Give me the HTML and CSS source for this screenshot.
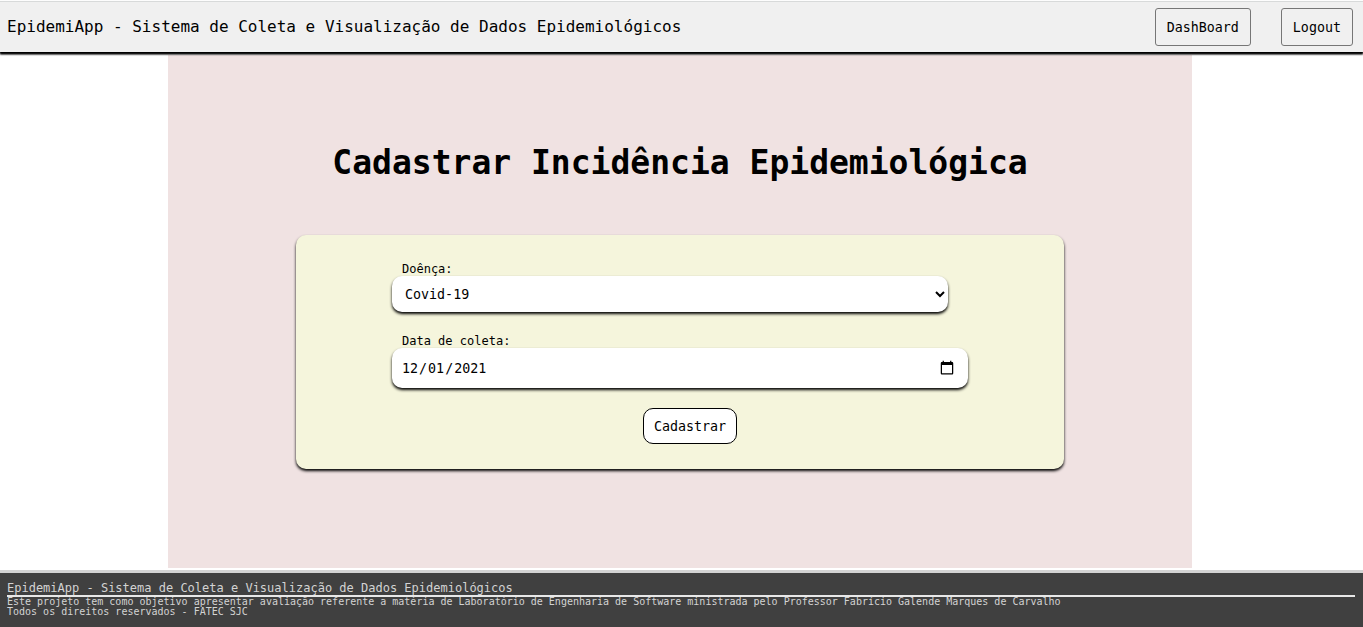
FILE: index.html
```html
<!DOCTYPE html>
<html lang="pt-BR">
<head>
<meta charset="utf-8">
<title>EpidemiApp</title>
<link rel="stylesheet" href="styles.css">
</head>
<body>
<header class="topbar">
  <span class="brand">EpidemiApp - Sistema de Coleta e Visualização de Dados Epidemiológicos</span>
  <nav class="nav">
    <button type="button" class="nav-button">DashBoard</button>
    <button type="button" class="nav-button">Logout</button>
  </nav>
</header>
<main class="page">
  <section class="panel">
    <h1 class="title">Cadastrar Incidência Epidemiológica</h1>
    <form class="card">
      <div class="field">
        <label class="label" for="disease">Doênça:</label>
        <select class="control select" id="disease"><option>Covid-19</option></select>
      </div>
      <div class="field">
        <label class="label" for="date">Data de coleta:</label>
        <input class="control date" id="date" type="date" value="2021-12-01">
      </div>
      <button type="button" class="submit">Cadastrar</button>
    </form>
  </section>
</main>
<footer class="footer">
  <p class="footer-title">EpidemiApp - Sistema de Coleta e Visualização de Dados Epidemiológicos</p>
  <p class="footer-text">Este projeto tem como objetivo apresentar avaliação referente a matéria de Laboratório de Engenharia de Software ministrada pelo Professor Fabrício Galende Marques de Carvalho</p>
  <p class="footer-text">Todos os direitos reservados - FATEC SJC</p>
</footer>
</body>
</html>
```
FILE: styles.css
```css
* {
  box-sizing: border-box;
  font-family: "Lucida Sans Typewriter", "DejaVu Sans Mono", monospace;
}

body {
  display: flex;
  flex-direction: column;
  min-height: 100vh;
  margin: 0;
  padding-top: 1px;
  background: #fff;
  color: #000;
}

.topbar {
  position: relative;
  display: flex;
  align-items: center;
  justify-content: space-between;
  padding: 6px 10px 6px 7px;
  border-top: 1px solid #d8dada;
  background: #f0f0f0;
  box-shadow: 0 2px 2px #000, 0 2px 2px #000;
}

.brand {
  font-size: 16px;
  line-height: 20px;
}

.nav {
  display: flex;
  gap: 30px;
}

.nav-button {
  height: 38px;
  padding: 0 11px;
  border: 1px solid #767676;
  border-radius: 3px;
  background: #f0f0f0;
  color: #000;
}

.page {
  flex: 1;
  display: flex;
  justify-content: center;
  padding: 3px 3px 2px 0;
}

.panel {
  display: flex;
  flex-direction: column;
  align-items: center;
  width: 100%;
  max-width: 1024px;
  padding: 88px 16px 16px;
  background: #f0e2e2;
}

.title {
  margin: 0 0 52px;
  font-size: 33px;
  line-height: 40px;
}

.card {
  display: flex;
  flex-direction: column;
  align-items: center;
  gap: 20px;
  width: 100%;
  max-width: 768px;
  padding: 27px 16px 25px;
  border-radius: 10px;
  background: #f5f5dc;
  box-shadow: 0 2px 3px #000;
}

.field {
  display: flex;
  flex-direction: column;
  width: 100%;
  max-width: 576px;
}

.field:first-child {
  margin-bottom: 2px;
}

.label {
  padding-left: 10px;
  font-size: 12px;
  line-height: 14px;
}

.control {
  border: 0;
  border-radius: 10px;
  background: #fff;
  color: #000;
  box-shadow: 0 2px 3px #000;
}

.select {
  height: 36px;
  margin-right: 20px;
  padding: 0 1px 0 9px;
}

.date {
  height: 40px;
  padding: 0 11px 0 9px;
}

.date::-webkit-calendar-picker-indicator {
  width: 16px;
  height: 16px;
}

.submit {
  height: 36px;
  margin-left: 20px;
  padding: 0 10px;
  border: 1px solid #000;
  border-radius: 10px;
  background: #fff;
  color: #000;
}

.footer {
  min-height: 57px;
  padding: 8px 8px 10px 7px;
  border-top: 3px solid #d3d3d3;
  background: #404040;
  color: #d3d3d3;
}

.footer-title {
  margin: 0;
  border-bottom: 2px solid #e8e8e8;
  font-size: 12px;
  line-height: 14px;
}

.footer-text {
  margin: 0;
  font-size: 10px;
  line-height: 10px;
}
```
